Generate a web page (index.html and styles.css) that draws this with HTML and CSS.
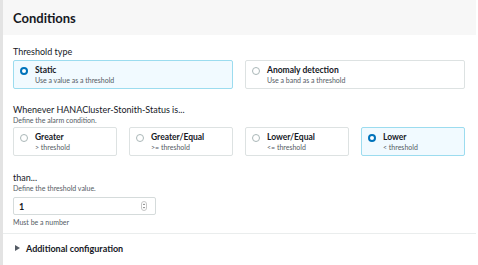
FILE: index.html
```html
<!DOCTYPE html>
<html lang="en">
<head>
    <meta charset="UTF-8">
    <title>Conditions</title>
    <link rel="stylesheet" href="styles.css">
</head>
<body>
    <div class="panel">
        <div class="panel-header">
            <h2>Conditions</h2>
        </div>
        <div class="panel-body">
            <div class="field">
                <div class="label">Threshold type</div>
                <div class="tiles two">
                    <div class="tile selected">
                        <span class="radio"></span>
                        <div>
                            <div class="tile-title">Static</div>
                            <div class="tile-desc">Use a value as a threshold</div>
                        </div>
                    </div>
                    <div class="tile">
                        <span class="radio"></span>
                        <div>
                            <div class="tile-title">Anomaly detection</div>
                            <div class="tile-desc">Use a band as a threshold</div>
                        </div>
                    </div>
                </div>
            </div>

            <div class="field">
                <div class="label">Whenever HANACluster-Stonith-Status is...</div>
                <div class="hint">Define the alarm condition.</div>
                <div class="tiles four">
                    <div class="tile">
                        <span class="radio"></span>
                        <div>
                            <div class="tile-title">Greater</div>
                            <div class="tile-desc">&gt; threshold</div>
                        </div>
                    </div>
                    <div class="tile">
                        <span class="radio"></span>
                        <div>
                            <div class="tile-title">Greater/Equal</div>
                            <div class="tile-desc">&gt;= threshold</div>
                        </div>
                    </div>
                    <div class="tile">
                        <span class="radio"></span>
                        <div>
                            <div class="tile-title">Lower/Equal</div>
                            <div class="tile-desc">&lt;= threshold</div>
                        </div>
                    </div>
                    <div class="tile selected">
                        <span class="radio"></span>
                        <div>
                            <div class="tile-title">Lower</div>
                            <div class="tile-desc">&lt; threshold</div>
                        </div>
                    </div>
                </div>
            </div>

            <div class="field last">
                <div class="label">than...</div>
                <div class="hint">Define the threshold value.</div>
                <div class="number-input">
                    <span>1</span>
                    <svg class="spinner" width="6" height="10" viewBox="0 0 6 10">
                        <rect x="0.5" y="0.5" width="5" height="9" rx="2.5" fill="none" stroke="#c6c6c6"/>
                        <path d="M1.8 4 L3 2.6 L4.2 4 Z" fill="#777"/>
                        <path d="M1.8 6 L3 7.4 L4.2 6 Z" fill="#777"/>
                    </svg>
                </div>
                <div class="constraint">Must be a number</div>
            </div>
        </div>
        <div class="panel-footer">
            <span class="caret"></span>
            <span>Additional configuration</span>
        </div>
    </div>
</body>
</html>
```

FILE: styles.css
```css
body {
    margin: 0;
    background: #fff;
    font-family: Lato, "Open Sans", sans-serif;
    color: #16191f;
}
.panel {
    width: 476px;
    height: 265px;
    border-left: 3px solid #e3e3e3;
    box-sizing: border-box;
}
.panel-header {
    height: 35px;
    background: #f7f7f7;
    display: flex;
    align-items: center;
    padding-left: 10px;
}
.panel-header h2 {
    margin: 0;
    font-size: 13px;
    font-weight: 700;
}
.panel-body {
    padding: 11px 10px 0 10px;
    height: 198px;
    box-sizing: border-box;
}
.field + .field {
    margin-top: 15px;
}
.field.last {
    margin-top: 16px;
}
.label {
    font-size: 9px;
    line-height: 12px;
    color: #16191f;
}
.hint {
    font-size: 7px;
    line-height: 9px;
    color: #545b64;
}
.tiles {
    display: grid;
    gap: 12px;
    margin-top: 2px;
    width: 452px;
}
.tiles.two {
    grid-template-columns: 1fr 1fr;
}
.tiles.four {
    grid-template-columns: repeat(4, 1fr);
}
.tile {
    height: 29px;
    box-sizing: border-box;
    border: 1px solid #dde2e2;
    border-radius: 2px;
    display: flex;
    align-items: flex-start;
    padding: 4px 6px;
    gap: 7px;
}
.tile.selected {
    background: #f1faff;
    border-color: #9cdcef;
}
.radio {
    width: 8px;
    height: 8px;
    border-radius: 50%;
    border: 1px solid #aab7b8;
    box-sizing: border-box;
    margin-top: 2px;
    flex-shrink: 0;
    background: #fff;
}
.tile.selected .radio {
    border: 2.5px solid #0073bb;
}
.tile-title {
    font-size: 8.5px;
    font-weight: 700;
    line-height: 11px;
}
.tile-desc {
    font-size: 7px;
    line-height: 9px;
    color: #545b64;
}
.number-input {
    width: 143px;
    height: 18px;
    box-sizing: border-box;
    border: 1px solid #d5dbdb;
    border-radius: 2px;
    margin-top: 4px;
    display: flex;
    align-items: center;
    justify-content: space-between;
    padding: 0 8px 0 5px;
    font-size: 9px;
    font-weight: 700;
}
.constraint {
    font-size: 7px;
    line-height: 9px;
    color: #545b64;
    margin-top: 3px;
}
.panel-footer {
    border-top: 1px solid #eaeded;
    height: 28px;
    display: flex;
    align-items: center;
    padding-left: 12px;
    gap: 6px;
    font-size: 9px;
    font-weight: 700;
}
.caret {
    width: 0;
    height: 0;
    border-top: 3.5px solid transparent;
    border-bottom: 3.5px solid transparent;
    border-left: 5px solid #545b64;
}
```
